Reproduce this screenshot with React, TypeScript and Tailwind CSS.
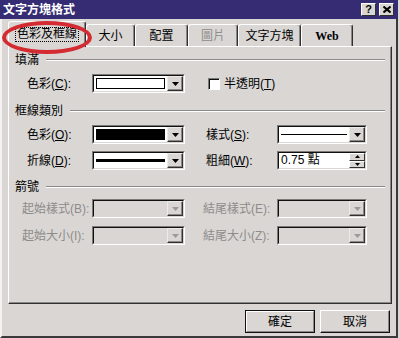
import type { ReactNode } from "react";

const face = "font-['Liberation_Sans','Noto_Sans_CJK_TC',sans-serif]";

const Tri = ({ up, dim }: { up?: boolean; dim?: boolean }) => (
  <svg width="7" height="4" viewBox="0 0 7 4">
    <path d={up ? "M3.5 0L7 4H0z" : "M0 0h7L3.5 4z"} fill={dim ? "#9c9a98" : "#000"} />
  </svg>
);

const DropButton = ({ dim }: { dim?: boolean }) => (
  <div className="w-[16px] h-full flex items-center justify-center bg-[#d9d6d4] border border-t-[#ecebea] border-l-[#ecebea] border-r-[#303030] border-b-[#303030] shadow-[inset_-1px_-1px_0_#8a8886]">
    <Tri dim={dim} />
  </div>
);

const Field = ({ w, dim, children }: { w: string; dim?: boolean; children?: ReactNode }) => (
  <div className={`${w} h-[19px] flex border border-t-[#7c7a78] border-l-[#7c7a78] border-r-white border-b-white`}>
    <div className={`flex-1 flex border border-t-[#101010] border-l-[#101010] border-r-[#d9d6d4] border-b-[#d9d6d4] ${dim ? "bg-[#d9d6d4]" : "bg-white"}`}>
      <div className="flex-1 flex items-center px-[2px]">{children}</div>
      <DropButton dim={dim} />
    </div>
  </div>
);

const Label = ({ children, w, dim }: { children: ReactNode; w: string; dim?: boolean }) => (
  <div className={`${w} text-[12px] leading-[14px] whitespace-nowrap ${dim ? "text-[#8e8c8a]" : "text-black"}`}>{children}</div>
);

const Header = ({ children }: { children: ReactNode }) => (
  <div className="flex items-center gap-[7px] pl-[6px] pr-[6px] h-[14px]">
    <span className="text-[12px] leading-[14px] text-black">{children}</span>
    <div className="flex-1 h-[2px] border-t border-t-[#8c8a88] border-b border-b-white" />
  </div>
);

const Tab = ({ w, label, dim, serif }: { w: string; label: string; dim?: boolean; serif?: boolean }) => (
  <div className={`${w} h-[22px] flex items-center justify-center border-t border-l border-t-white border-l-white border-r border-r-[#303030] rounded-t-[3px] shadow-[inset_-1px_0_0_#8a8886] text-[12px] ${dim ? "text-[#8e8c8a]" : "text-black"} ${serif ? "font-['Liberation_Serif',serif] font-bold" : ""}`}>
    {label}
  </div>
);

const Btn = ({ children, main }: { children: ReactNode; main?: boolean }) => (
  <div className={`w-[70px] h-[23px] flex items-center justify-center text-[12px] text-black bg-[#d9d6d4] border ${main ? "border-[#101010]" : "border-t-white border-l-white border-r-[#101010] border-b-[#101010]"}`}>
    <div className={`w-full h-full flex items-center justify-center ${main ? "border border-t-white border-l-white border-r-[#8a8886] border-b-[#8a8886]" : "shadow-[inset_-1px_-1px_0_#8a8886]"}`}>
      {children}
    </div>
  </div>
);

export default function App() {
  return (
    <div className={`w-[400px] h-[338px] bg-[#d9d6d4] relative overflow-hidden flex flex-col ${face}`}>
      {/* title bar */}
      <div className="h-[19px] w-[398px] bg-[#352c74] flex items-center justify-between pl-[3px] pr-[4px]">
        <span className="text-white text-[12px] font-bold leading-[14px]">文字方塊格式</span>
        <div className="flex gap-[3px]">
          <div className="w-[15px] h-[13px] bg-[#d9d6d4] flex items-center justify-center text-[11px] font-bold leading-none text-black border border-t-white border-l-white border-r-[#303030] border-b-[#303030]">?</div>
          <div className="w-[15px] h-[13px] bg-[#d9d6d4] flex items-center justify-center border border-t-white border-l-white border-r-[#303030] border-b-[#303030]">
            <svg width="8" height="7" viewBox="0 0 8 7">
              <path d="M0.5 0.5L7.5 6.5M7.5 0.5L0.5 6.5" stroke="#000" strokeWidth="2" />
            </svg>
          </div>
        </div>
      </div>

      {/* window body */}
      <div className="flex-1 flex flex-col w-[398px] border-l-2 border-l-[#f4f3f2] border-r-2 border-r-[#3a3a3a] border-b-2 border-b-[#3a3a3a]">
        {/* tabs */}
        <div className="h-[25px] mt-[2px] ml-[6px] flex items-end">
          <div className="relative z-10 w-[78px] h-[26px] -mb-[1px] flex items-center justify-center bg-[#d9d6d4] border-t border-l border-t-white border-l-white border-r border-r-[#303030] rounded-t-[3px] shadow-[inset_-1px_0_0_#8a8886]">
            <span className="text-[12px] leading-[13px] text-black border border-dotted border-black px-[1px]">色彩及框線</span>
          </div>
          <Tab w="w-[49px]" label="大小" />
          <Tab w="w-[53px]" label="配置" />
          <Tab w="w-[50px]" label="圖片" dim />
          <Tab w="w-[63px]" label="文字方塊" />
          <Tab w="w-[52px]" label="Web" serif />
        </div>

        {/* panel */}
        <div className="ml-[6px] w-[384px] h-[258px] flex flex-col pt-[6px] border border-t-white border-l-white border-r-[#303030] border-b-[#303030] shadow-[inset_-1px_-1px_0_#8a8886]">
          <Header>填滿</Header>
          <div className="flex items-center mt-[7px] pl-[18px]">
            <Label w="w-[65px]">色彩(<u>C</u>):</Label>
            <Field w="w-[93px]">
              <div className="w-full h-[11px] border border-black bg-white" />
            </Field>
            <div className="ml-[23px] flex items-center gap-[4px]">
              <div className="w-[12px] h-[12px] bg-white border border-t-[#7c7a78] border-l-[#7c7a78] border-r-white border-b-white shadow-[inset_1px_1px_0_#101010]" />
              <span className="text-[12px] leading-[14px] text-black">半透明(<u>T</u>)</span>
            </div>
          </div>

          <div className="mt-[11px]">
            <Header>框線類別</Header>
          </div>
          <div className="flex items-center mt-[7px] pl-[18px]">
            <Label w="w-[65px]">色彩(<u>O</u>):</Label>
            <Field w="w-[93px]">
              <div className="w-full h-[11px] bg-black" />
            </Field>
            <Label w="w-[71px] ml-[21px]">樣式(<u>S</u>):</Label>
            <Field w="w-[90px]">
              <div className="w-full h-[1px] bg-black" />
            </Field>
          </div>
          <div className="flex items-center mt-[7px] pl-[18px]">
            <Label w="w-[65px]">折線(<u>D</u>):</Label>
            <Field w="w-[93px]">
              <div className="w-full h-[3px] bg-black" />
            </Field>
            <Label w="w-[71px] ml-[21px]">粗細(<u>W</u>):</Label>
            <div className="w-[90px] h-[19px] flex border border-t-[#7c7a78] border-l-[#7c7a78] border-r-white border-b-white">
              <div className="flex-1 flex bg-white border border-t-[#101010] border-l-[#101010] border-r-[#d9d6d4] border-b-[#d9d6d4]">
                <span className="flex-1 text-[12px] leading-[15px] pl-[2px] text-black">0.75 點</span>
                <div className="w-[16px] flex flex-col">
                  <div className="flex-1 flex items-center justify-center bg-[#d9d6d4] border border-t-white border-l-white border-r-[#303030] border-b-[#303030]">
                    <svg width="5" height="3" viewBox="0 0 5 3"><path d="M2.5 0L5 3H0z" fill="#000" /></svg>
                  </div>
                  <div className="flex-1 flex items-center justify-center bg-[#d9d6d4] border border-t-white border-l-white border-r-[#303030] border-b-[#303030]">
                    <svg width="5" height="3" viewBox="0 0 5 3"><path d="M0 0h5L2.5 3z" fill="#000" /></svg>
                  </div>
                </div>
              </div>
            </div>
          </div>

          <div className="mt-[10px]">
            <Header>箭號</Header>
          </div>
          <div className="flex items-center mt-[5px] pl-[13px]">
            <Label w="w-[70px]" dim>起始樣式(B):</Label>
            <Field w="w-[93px]" dim />
            <Label w="w-[74px] ml-[18px]" dim>結尾樣式(E):</Label>
            <Field w="w-[90px]" dim />
          </div>
          <div className="flex items-center mt-[8px] pl-[13px]">
            <Label w="w-[70px]" dim>起始大小(I):</Label>
            <Field w="w-[93px]" dim />
            <Label w="w-[74px] ml-[18px]" dim>結尾大小(Z):</Label>
            <Field w="w-[90px]" dim />
          </div>
        </div>

        {/* buttons */}
        <div className="mt-[6px] ml-[6px] w-[382px] flex justify-end gap-[5px]">
          <Btn main>確定</Btn>
          <Btn>取消</Btn>
        </div>
      </div>

      {/* red marker ellipse around the first tab */}
      <div className="absolute z-20 left-[2px] top-[21px] w-[90px] h-[33px] rounded-[50%] border-[4px] border-[#d42a32]" />
    </div>
  );
}
